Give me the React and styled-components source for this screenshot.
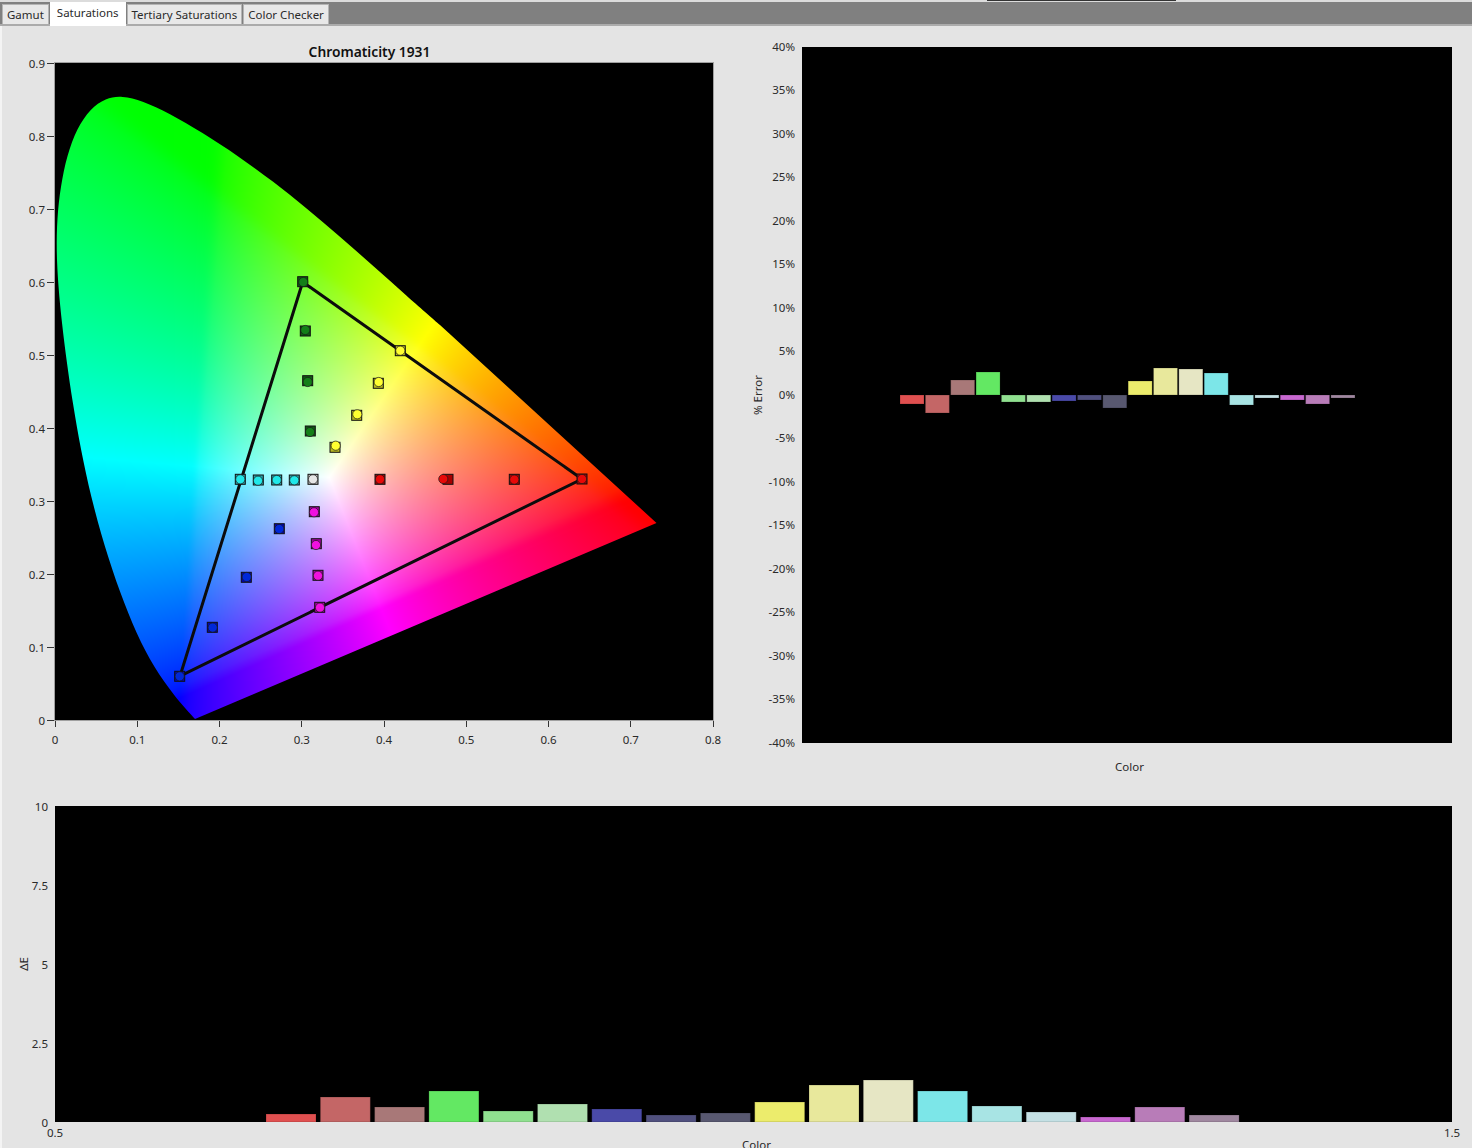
import React, { useEffect, useRef } from "react";
import styled, { createGlobalStyle } from "styled-components";

const TABS = ["Gamut", "Saturations", "Tertiary Saturations", "Color Checker"];

const COLORS = [
  "#e05050", "#c46666", "#a87878", "#63e863", "#90e090", "#b0e0b0",
  "#4a4aa8", "#50507e", "#585870", "#ecec6c", "#e8e89c", "#e6e6c4",
  "#7ce6e8", "#a8e4e4", "#c4e0e4", "#c868d0", "#b87cb8", "#a088a0",
];

// pixels from the zero line, up is positive
const ERROR_BARS = [-9, -18, 15, 23, -7, -7, -6, -5, -13, 14, 27, 26, 22, -10, -3, -5, -9, -3];
const DELTA_BARS = [8, 25, 15, 31, 11, 18, 13, 7, 9, 20, 37, 42, 31, 16, 10, 5, 15, 7];

const CHROMA_Y = ["0.9", "0.8", "0.7", "0.6", "0.5", "0.4", "0.3", "0.2", "0.1", "0"];
const CHROMA_X = ["0", "0.1", "0.2", "0.3", "0.4", "0.5", "0.6", "0.7", "0.8"];
const ERROR_Y = [
  "40%", "35%", "30%", "25%", "20%", "15%", "10%", "5%", "0%",
  "-5%", "-10%", "-15%", "-20%", "-25%", "-30%", "-35%", "-40%",
];
const DELTA_Y = ["10", "7.5", "5", "2.5", "0"];

const PLOT_W = 658;
const PLOT_H = 657;

// outline of the horseshoe, in page pixels, traced clockwise from the violet corner
const LOCUS = [
  [195, 719], [173, 696.7], [153, 670], [136.7, 636.7], [120, 596.7], [103, 543],
  [90, 500], [80, 446.7], [71.7, 400], [66.7, 363], [61.7, 323], [57.5, 287],
  [55.5, 247], [56, 220], [59.7, 187], [65.7, 153], [75.7, 126], [89, 105],
  [106.7, 95.5], [120, 93.5], [140, 98], [166.7, 111], [200, 130], [240, 156.7],
  [273, 180], [306.7, 208], [340, 236.7], [373, 265], [406.7, 296.7], [440, 325],
  [656.5, 523],
];

const TRIANGLE = [[302.7, 282], [582, 479], [180, 676]];

// square = target, circle = measured
const MARKERS = [
  { fill: "#0f5a12", dot: "#137f18", sq: [302.7, 281.7], ci: [303.3, 282] },
  { fill: "#0f5a12", dot: "#137f18", sq: [305.3, 331], ci: [305.3, 330] },
  { fill: "#0f5a12", dot: "#137f18", sq: [307.7, 380.7], ci: [307.7, 382] },
  { fill: "#0f5a12", dot: "#137f18", sq: [310.3, 431], ci: [310, 432] },
  { fill: "#b8b820", dot: "#ffff30", sq: [400.3, 350.7], ci: [400.3, 350.7] },
  { fill: "#b8b820", dot: "#ffff30", sq: [378.3, 383.3], ci: [378.7, 382] },
  { fill: "#b8b820", dot: "#ffff30", sq: [356.7, 415.3], ci: [357.3, 414.3] },
  { fill: "#b8b820", dot: "#ffff30", sq: [335, 447.3], ci: [335.7, 445.7] },
  { fill: "#2aa0a8", dot: "#20e8e8", sq: [240.3, 479.3], ci: [240.3, 479.3] },
  { fill: "#2aa0a8", dot: "#20e8e8", sq: [258.3, 480], ci: [258, 480.7] },
  { fill: "#2aa0a8", dot: "#20e8e8", sq: [276.7, 480], ci: [276.7, 480] },
  { fill: "#2aa0a8", dot: "#20e8e8", sq: [294.3, 480], ci: [294.3, 480.3] },
  { fill: "#b8b8b8", dot: "#e6e6e6", sq: [313, 479.3], ci: [313, 479.3] },
  { fill: "#a80000", dot: "#e80808", sq: [380, 479.3], ci: [380, 479.3] },
  { fill: "#a80000", dot: "#e80808", sq: [448, 479.3], ci: [443.3, 479] },
  { fill: "#a80000", dot: "#e80808", sq: [514.3, 479.3], ci: [514.3, 479.6] },
  { fill: "#a80000", dot: "#e80808", sq: [582, 479], ci: [582, 479] },
  { fill: "#a000a0", dot: "#f010e0", sq: [314.3, 511.7], ci: [314, 512.3] },
  { fill: "#a000a0", dot: "#f010e0", sq: [316.3, 543.7], ci: [316, 545] },
  { fill: "#a000a0", dot: "#f010e0", sq: [318, 575.3], ci: [318, 575.7] },
  { fill: "#a000a0", dot: "#f010e0", sq: [319.7, 607.3], ci: [320, 607.6] },
  { fill: "#0000b8", dot: "#0028d8", sq: [279.3, 528.7], ci: [279.3, 529] },
  { fill: "#0000b8", dot: "#0028d8", sq: [246.3, 577.3], ci: [246.7, 577] },
  { fill: "#0000b8", dot: "#0028d8", sq: [212.3, 627.3], ci: [212.7, 627.6] },
  { fill: "#0000b8", dot: "#0028d8", sq: [179.7, 676.3], ci: [179.7, 676.3] },
];

function invert3(m) {
  const [a, b, c, d, e, f, g, h, i] = m;
  const A = e * i - f * h;
  const B = f * g - d * i;
  const C = d * h - e * g;
  const det = a * A + b * B + c * C;
  return [
    A / det, (c * h - b * i) / det, (b * f - c * e) / det,
    B / det, (a * i - c * g) / det, (c * d - a * f) / det,
    C / det, (b * g - a * h) / det, (a * e - b * d) / det,
  ];
}

// XYZ to RGB for primaries a little outside sRGB, so the field has no crease at the triangle
function wideMatrix() {
  const [rx, ry] = [0.69, 0.3];
  const [gx, gy] = [0.19, 0.74];
  const [bx, by] = [0.15, 0.03];
  const [wx, wy] = [0.333, 0.333];
  const base = [rx, gx, bx, ry, gy, by, 1 - rx - ry, 1 - gx - gy, 1 - bx - by];
  const inv = invert3(base);
  const W = [wx / wy, 1, (1 - wx - wy) / wy];
  const s = [
    inv[0] * W[0] + inv[1] * W[1] + inv[2] * W[2],
    inv[3] * W[0] + inv[4] * W[1] + inv[5] * W[2],
    inv[6] * W[0] + inv[7] * W[1] + inv[8] * W[2],
  ];
  return invert3([
    base[0] * s[0], base[1] * s[1], base[2] * s[2],
    base[3] * s[0], base[4] * s[1], base[5] * s[2],
    base[6] * s[0], base[7] * s[1], base[8] * s[2],
  ]);
}

const EXPONENT = 1 / 1.6;
const soft = (v) => (v + Math.sqrt(v * v + 0.0004)) / 2;
const TOE = 0.03;
const TOE_SLOPE = Math.pow(TOE, EXPONENT) / TOE;
const gamma = (v) =>
  Math.round(255 * (v < TOE ? v * TOE_SLOPE : Math.pow(Math.min(1, v), EXPONENT)));

function xyToRgb(x, y, M) {
  const X = x / y;
  const Z = (1 - x - y) / y;
  const r = soft(M[0] * X + M[1] + M[2] * Z);
  const g = soft(M[3] * X + M[4] + M[5] * Z);
  const b = soft(M[6] * X + M[7] + M[8] * Z);
  const m = Math.max(r, g, b, 1e-6);
  return [gamma(r / m), gamma(g / m), gamma(b / m)];
}

function smoothPoints(points, passes) {
  let pts = points;
  for (let n = 0; n < passes; n++) {
    pts = pts.map((p, i) => {
      if (i === 0 || i >= pts.length - 2) return p;
      return [
        (pts[i - 1][0] + 2 * p[0] + pts[i + 1][0]) / 4,
        (pts[i - 1][1] + 2 * p[1] + pts[i + 1][1]) / 4,
      ];
    });
  }
  return pts;
}

function locusPath() {
  const pts = smoothPoints(LOCUS, 2).map(([x, y]) => [x - 55, y - 63]);
  const path = new Path2D();
  path.moveTo(pts[0][0], pts[0][1]);
  // the last span to the red corner stays straight
  for (let i = 0; i < pts.length - 2; i++) {
    const p0 = pts[Math.max(0, i - 1)];
    const p1 = pts[i];
    const p2 = pts[i + 1];
    const p3 = pts[Math.min(pts.length - 2, i + 2)];
    path.bezierCurveTo(
      p1[0] + (p2[0] - p0[0]) / 6,
      p1[1] + (p2[1] - p0[1]) / 6,
      p2[0] - (p3[0] - p1[0]) / 6,
      p2[1] - (p3[1] - p1[1]) / 6,
      p2[0],
      p2[1]
    );
  }
  path.lineTo(pts[pts.length - 1][0], pts[pts.length - 1][1]);
  path.closePath();
  return path;
}

const Horseshoe = () => {
  const ref = useRef(null);

  useEffect(() => {
    const ctx = ref.current.getContext("2d");
    const image = ctx.createImageData(PLOT_W, PLOT_H);
    const M = wideMatrix();
    for (let py = 0; py < PLOT_H; py++) {
      for (let px = 0; px < PLOT_W; px++) {
        const x = px / 822.5;
        const y = Math.max(0.001, (PLOT_H - py) / 730);
        const [r, g, b] = xyToRgb(x, y, M);
        const i = (py * PLOT_W + px) * 4;
        image.data[i] = r;
        image.data[i + 1] = g;
        image.data[i + 2] = b;
        image.data[i + 3] = 255;
      }
    }
    ctx.putImageData(image, 0, 0);
    ctx.globalCompositeOperation = "destination-in";
    ctx.fill(locusPath());
  }, []);

  return <GamutCanvas ref={ref} width={PLOT_W} height={PLOT_H} />;
};

const GamutOverlay = () => (
  <Overlay viewBox={`55 63 ${PLOT_W} ${PLOT_H}`}>
    <polygon
      points={TRIANGLE.map((p) => p.join(",")).join(" ")}
      fill="none"
      stroke="#0c0c0c"
      strokeWidth="3"
    />
    {MARKERS.map((m, i) => (
      <g key={i}>
        <rect
          x={m.sq[0] - 5}
          y={m.sq[1] - 5}
          width="10"
          height="10"
          fill={m.fill}
          stroke="#101010"
          strokeWidth="1"
        />
        <circle cx={m.ci[0]} cy={m.ci[1]} r="4.6" fill={m.dot} stroke="#1a1a1a" strokeWidth="0.7" />
      </g>
    ))}
  </Overlay>
);

const BarSvg = ({ width, height, start, pitch, barWidth, zero, values }) => (
  <svg width={width} height={height} viewBox={`0 0 ${width} ${height}`} style={{ display: "block" }}>
    {values.map((v, i) => (
      <rect
        key={i}
        x={start + pitch * i}
        y={v > 0 ? zero - v : zero}
        width={barWidth}
        height={Math.abs(v)}
        fill={COLORS[i]}
        stroke="#000"
        strokeOpacity="0.2"
      />
    ))}
  </svg>
);

const App = () => (
  <Page>
    <GlobalStyle />
    <TopEdge>
      <EdgeMark />
    </TopEdge>
    <TabBar>
      {TABS.map((t, i) => (
        <Tab key={t} $active={i === 1}>
          {t}
        </Tab>
      ))}
    </TabBar>
    <Content>
      <TopRow>
        <ChromaChart>
          <ChartTitle>Chromaticity 1931</ChartTitle>
          <ChromaBody>
            <YAxis $width={55} $height={PLOT_H}>
              {CHROMA_Y.map((l) => (
                <YTick key={l} $marked>
                  {l}
                </YTick>
              ))}
            </YAxis>
            <ChromaPlot>
              <Horseshoe />
              <GamutOverlay />
            </ChromaPlot>
          </ChromaBody>
          <XAxis $left={55} $width={PLOT_W}>
            {CHROMA_X.map((l) => (
              <XTick key={l} $marked>
                {l}
              </XTick>
            ))}
          </XAxis>
        </ChromaChart>
        <ErrorChart>
          <ErrorBody>
            <AxisTitle $left={12}>% Error</AxisTitle>
            <YAxis $width={39} $height={696}>
              {ERROR_Y.map((l) => (
                <YTick key={l} $raised>
                  {l}
                </YTick>
              ))}
            </YAxis>
            <BlackPlot>
              <BarSvg
                width={650}
                height={696}
                start={98}
                pitch={25.35}
                barWidth={24}
                zero={348}
                values={ERROR_BARS}
              />
            </BlackPlot>
          </ErrorBody>
          <ColorLabel>Color</ColorLabel>
        </ErrorChart>
      </TopRow>
      <DeltaChart>
        <DeltaBody>
          <AxisTitle $left={17}>ΔE</AxisTitle>
          <YAxis $width={26} $height={316}>
            {DELTA_Y.map((l) => (
              <YTick key={l}>{l}</YTick>
            ))}
          </YAxis>
          <BlackPlot>
            <BarSvg
              width={1397}
              height={316}
              start={211}
              pitch={54.3}
              barWidth={50}
              zero={316}
              values={DELTA_BARS}
            />
          </BlackPlot>
        </DeltaBody>
        <XAxis $left={55} $width={1397}>
          <XTick>0.5</XTick>
          <XTick>1.5</XTick>
        </XAxis>
        <DeltaColor>Color</DeltaColor>
      </DeltaChart>
    </Content>
  </Page>
);

export default App;

const GlobalStyle = createGlobalStyle`
  html, body {
    margin: 0;
    padding: 0;
    background: #e4e4e4;
  }
  * {
    box-sizing: border-box;
  }
`;

const Page = styled.div`
  width: 1472px;
  height: 1148px;
  overflow: hidden;
  background: #e4e4e4;
  font-family: "Noto Sans", "Open Sans", sans-serif;
  font-size: 11.5px;
  color: #2a2a2a;
`;

const TopEdge = styled.div`
  height: 2px;
  padding-left: 987px;
  background: #dcdcdc;
`;

const EdgeMark = styled.div`
  width: 189px;
  height: 1px;
  background: #333;
`;

const TabBar = styled.div`
  height: 24px;
  display: flex;
  align-items: flex-start;
  padding-left: 2px;
  gap: 1px;
  background: #808080;
  border-bottom: 2px solid #ababab;
`;

const Tab = styled.div`
  height: ${(p) => (p.$active ? "24px" : "20px")};
  margin-top: ${(p) => (p.$active ? "0" : "2px")};
  padding: ${(p) => (p.$active ? "1px 6px 0" : "1px 4px 0 4px")};
  line-height: 18px;
  white-space: nowrap;
  background: ${(p) => (p.$active ? "#fff" : "#e8e8e8")};
  border: 1px solid ${(p) => (p.$active ? "#fff" : "#b4b4b4")};
  border-bottom: none;
  position: relative;
  z-index: ${(p) => (p.$active ? 1 : 0)};
`;

const Content = styled.div`
  display: flex;
  flex-direction: column;
  border-left: 2px solid #f4f4f4;
`;

const TopRow = styled.div`
  height: 754px;
  display: flex;
  margin-left: -2px;
`;

const ChromaChart = styled.div`
  width: 739px;
  display: flex;
  flex-direction: column;
`;

const ChartTitle = styled.div`
  height: 37px;
  padding-bottom: 2px;
  display: flex;
  align-items: flex-end;
  justify-content: center;
  font-size: 13.8px;
  font-weight: 600;
  color: #111;
`;

const ChromaBody = styled.div`
  display: flex;
`;

const YAxis = styled.div`
  width: ${(p) => p.$width}px;
  height: ${(p) => p.$height}px;
  flex-shrink: 0;
  display: flex;
  flex-direction: column;
  justify-content: space-between;
`;

const YTick = styled.div`
  height: 0;
  display: flex;
  align-items: center;
  justify-content: flex-end;
  padding-right: ${(p) => (p.$marked ? "0" : "7px")};
  margin: ${(p) => (p.$raised ? "-1px 0 1px" : "0")};
  white-space: nowrap;

  ${(p) =>
    p.$marked &&
    `
    &::after {
      content: "";
      width: 8px;
      height: 1px;
      margin-left: 2px;
      background: #333;
    }
  `}
`;

const XAxis = styled.div`
  width: ${(p) => p.$width}px;
  margin-left: ${(p) => p.$left}px;
  display: flex;
  justify-content: space-between;
`;

const XTick = styled.div`
  width: 0;
  display: flex;
  flex-direction: column;
  align-items: center;
  white-space: nowrap;
  padding-top: ${(p) => (p.$marked ? "0" : "3px")};

  ${(p) =>
    p.$marked &&
    `
    &::before {
      content: "";
      width: 1px;
      height: 7px;
      margin-bottom: 5px;
      flex-shrink: 0;
      background: #333;
    }
  `}
`;

const ChromaPlot = styled.div`
  width: ${PLOT_W}px;
  height: ${PLOT_H}px;
  position: relative;
  background: #000;
  box-shadow: 0 0 0 1px #a0a0a0;
`;

const GamutCanvas = styled.canvas`
  display: block;
`;

const Overlay = styled.svg`
  position: absolute;
  inset: 0;
  width: 100%;
  height: 100%;
`;

const ErrorChart = styled.div`
  padding-top: 21px;
  display: flex;
  flex-direction: column;
`;

const ErrorBody = styled.div`
  display: flex;
  align-items: center;
`;

const AxisTitle = styled.div`
  width: 12px;
  margin-left: ${(p) => p.$left}px;
  display: flex;
  align-items: center;
  justify-content: center;
  writing-mode: vertical-rl;
  transform: rotate(180deg);
  white-space: nowrap;
`;

const BlackPlot = styled.div`
  background: #000;
  flex-shrink: 0;
`;

const ColorLabel = styled.div`
  margin-top: 16px;
  margin-left: 376px;
  white-space: nowrap;
`;

const DeltaChart = styled.div`
  padding-top: 26px;
  display: flex;
  flex-direction: column;
  margin-left: -2px;
`;

const DeltaBody = styled.div`
  display: flex;
  align-items: center;
`;

const DeltaColor = styled.div`
  margin-top: -3px;
  margin-left: 742px;
  white-space: nowrap;
`;
